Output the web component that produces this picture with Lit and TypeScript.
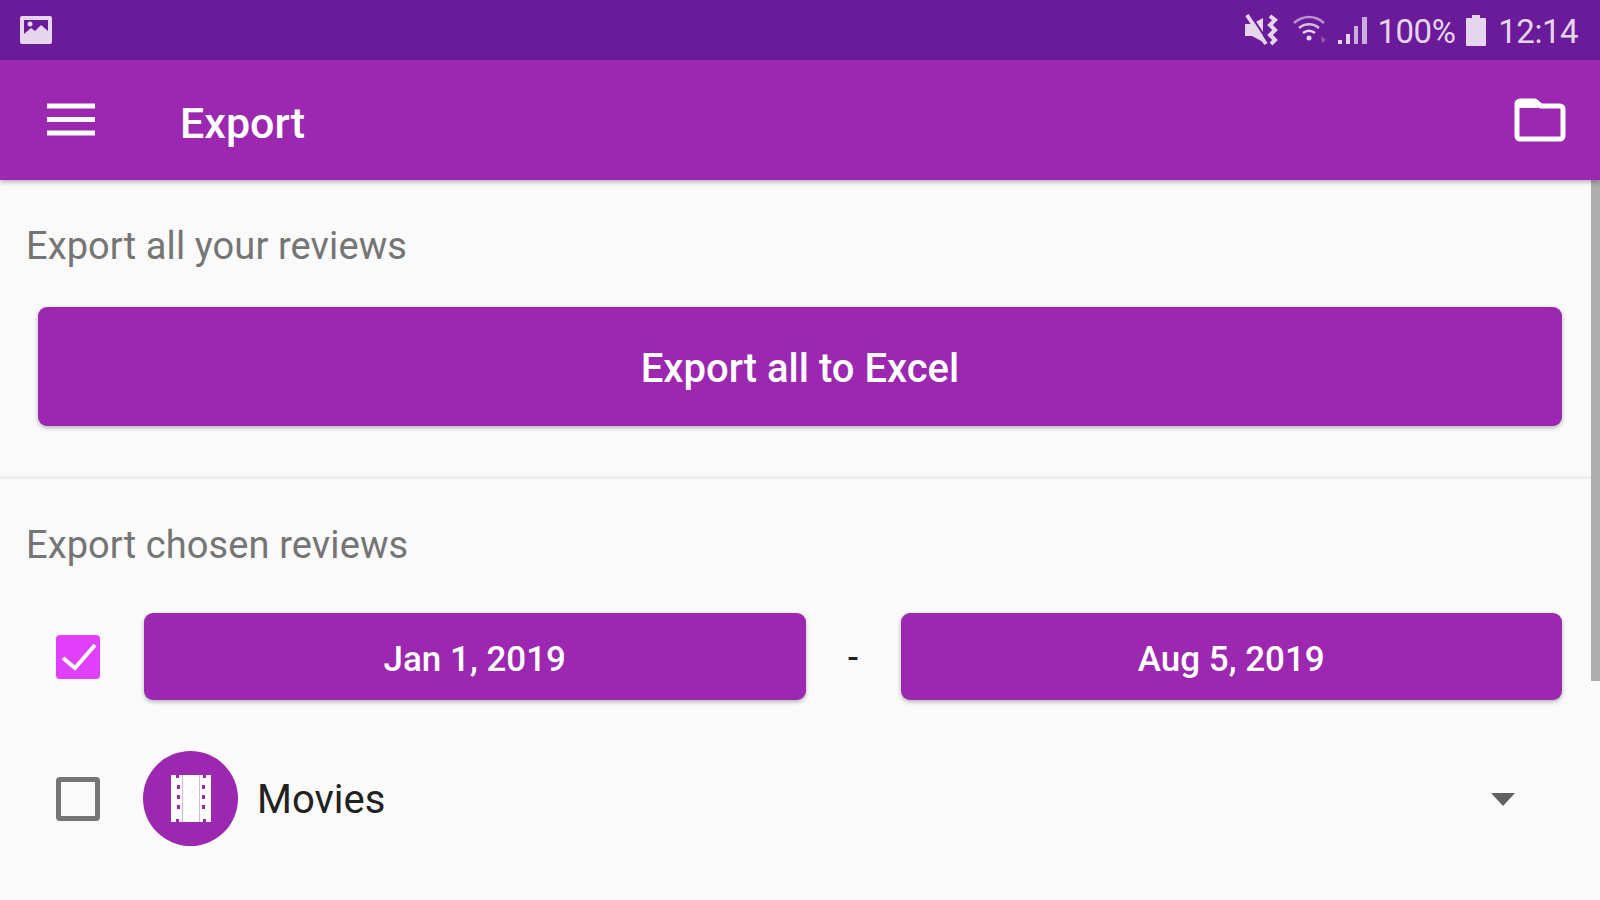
import { LitElement, html, css } from "lit";
import { customElement } from "lit/decorators.js";

@customElement("app-root")
export class AppRoot extends LitElement {
  static styles = css`
    :host {
      display: block;
      width: 1600px;
      height: 900px;
      overflow: hidden;
      position: relative;
      background: #fafafa;
      font-family: Roboto, "Liberation Sans", sans-serif;
    }
    .status {
      height: 60px;
      background: #6a1b9a;
      display: flex;
      align-items: center;
      padding: 0 22px 0 19px;
      color: #e6d5ee;
      box-sizing: border-box;
    }
    .status .spacer { flex: 1; }
    .status .text {
      font-size: 33px;
      line-height: 60px;
      letter-spacing: -0.5px;
      padding-top: 3px;
    }
    .status svg { display: block; }
    .mute { margin-right: 12px; }
    .wifi { margin-right: 7px; }
    .signal { margin-right: 9px; }
    .battery { margin: 0 11px 0 10px; }
    .appbar {
      height: 120px;
      background: #9c27b0;
      display: flex;
      align-items: center;
      padding: 0 34px 0 47px;
      color: #fff;
      box-shadow: 0 2px 5px rgba(0, 0, 0, 0.3);
      position: relative;
      z-index: 1;
    }
    .title {
      margin: 6px 0 0 85px;
      flex: 1;
      font-size: 43px;
      font-weight: 500;
      line-height: 114px;
    }
    .section { padding: 0 38px 0 26px; }
    .first {
      height: 296px;
      border-bottom: 3px solid #eeeeee;
      box-sizing: content-box;
    }
    .label {
      font-size: 38px;
      color: #757575;
      line-height: 44px;
      padding-top: 44px;
      letter-spacing: 0.1px;
    }
    .btn {
      background: #9c27b0;
      color: #fff;
      border-radius: 9px;
      font-weight: 500;
      display: flex;
      align-items: center;
      justify-content: center;
      box-shadow: 0 2px 4px rgba(0, 0, 0, 0.28);
      padding-top: 3px;
      box-sizing: border-box;
    }
    .btn-all {
      height: 119px;
      margin: 39px 0 0 12px;
      font-size: 40px;
    }
    .label.second { padding-top: 44px; }
    .row {
      display: flex;
      align-items: center;
      padding-left: 30px;
    }
    .dates { margin-top: 46px; height: 87px; }
    .date {
      flex: 1;
      height: 87px;
      font-size: 35px;
      padding-top: 5px;
    }
    .dash {
      width: 95px;
      text-align: center;
      font-size: 34px;
      font-weight: 500;
      color: #212121;
    }
    .check {
      width: 44px;
      height: 44px;
      box-sizing: border-box;
      margin-right: 44px;
      border-radius: 4px;
      flex: none;
    }
    .check.on { background: #e040fb; }
    .check.off { border: 5px solid #757575; margin-right: 43px; }
    .check svg { display: block; }
    .cat { margin-top: 51px; height: 95px; }
    .circle {
      width: 95px;
      height: 95px;
      border-radius: 50%;
      background: #9c27b0;
      display: flex;
      align-items: center;
      justify-content: center;
      flex: none;
    }
    .cat-name {
      margin-left: 19px;
      flex: 1;
      font-size: 40px;
      color: #212121;
      padding-top: 2px;
    }
    .arrow {
      width: 0;
      height: 0;
      border-left: 12px solid transparent;
      border-right: 12px solid transparent;
      border-top: 13px solid #616161;
      margin: 2px 47px 0 0;
    }
    .scrollbar {
      position: absolute;
      right: 0;
      top: 180px;
      width: 9px;
      height: 501px;
      background: #adadad;
    }
  `;

  render() {
    return html`
      <div class="status">
        <svg width="34" height="30" viewBox="0 0 34 30">
          <rect x="1" y="1" width="32" height="28" rx="2" fill="#e6d5ee" />
          <rect x="5" y="5" width="24" height="14" fill="#6a1b9a" />
          <circle cx="11" cy="9" r="2.5" fill="#e6d5ee" />
          <path d="M5 19l7-6 4 3 6-6 7 6v3z" fill="#e6d5ee" />
        </svg>
        <div class="spacer"></div>
        <svg class="mute" width="36" height="32" viewBox="0 0 36 32">
          <path d="M1 10h7l11-6v24L8 22H1z" fill="#e6d5ee" />
          <path d="M3 1l19 29" stroke="#e6d5ee" stroke-width="4" />
          <path d="M6 0l19 29" stroke="#6a1b9a" stroke-width="2" />
          <path d="M26 2l5 4-5 5 5 5-5 5 5 5-4 4" stroke="#e6d5ee" stroke-width="4" fill="none" />
        </svg>
        <svg class="wifi" width="38" height="32" viewBox="0 0 38 32">
          <g fill="none" stroke="#b98fd0" stroke-width="2.500">
            <path d="M2 9c9-8 21-8 30 0" />
            <path d="M7 14c6-5 14-5 20 0" stroke="#d6bde3" />
            <path d="M11 19c4-3 8-3 12 0" stroke="#e6d5ee" />
          </g>
          <circle cx="17" cy="24" r="2.5" fill="#e6d5ee" />
          <path d="M29 22l5 4-4 3z" fill="#8e5bab" />
        </svg>
        <svg class="signal" width="32" height="32" viewBox="0 0 32 32">
          <rect x="1" y="26" width="4" height="4" fill="#e6d5ee" />
          <rect x="9" y="20" width="4" height="10" fill="#e6d5ee" />
          <rect x="17" y="12" width="4" height="18" fill="#c9aed9" />
          <rect x="25" y="3" width="5" height="27" fill="#c9aed9" />
        </svg>
        <span class="text">100%</span>
        <svg class="battery" width="22" height="32" viewBox="0 0 22 32">
          <path d="M7 1h8v3h5a1 1 0 0 1 1 1v26a1 1 0 0 1-1 1H2a1 1 0 0 1-1-1V5a1 1 0 0 1 1-1h5z" fill="#e6d5ee" />
        </svg>
        <span class="text">12:14</span>
      </div>

      <div class="appbar">
        <svg width="48" height="34" viewBox="0 0 48 34">
          <path d="M0 3h48M0 16.500h48M0 30h48" stroke="#fff" stroke-width="5" />
        </svg>
        <div class="title">Export</div>
        <svg width="52" height="44" viewBox="0 0 52 44">
          <path d="M3 6a3 3 0 0 1 3-3h15l6 5h19a3 3 0 0 1 3 3v27a3 3 0 0 1-3 3H6a3 3 0 0 1-3-3z" fill="none" stroke="#fff" stroke-width="5" stroke-linejoin="round" />
          <path d="M3 5h17l5 5H3z" fill="#fff" />
        </svg>
      </div>

      <div class="section first">
        <div class="label">Export all your reviews</div>
        <div class="btn btn-all">Export all to Excel</div>
      </div>

      <div class="section">
        <div class="label second">Export chosen reviews</div>
        <div class="row dates">
          <div class="check on">
            <svg width="44" height="44" viewBox="0 0 44 44">
              <path d="M7 23l12 10L39 10" fill="none" stroke="#fff" stroke-width="4" />
            </svg>
          </div>
          <div class="btn date">Jan 1, 2019</div>
          <div class="dash">-</div>
          <div class="btn date">Aug 5, 2019</div>
        </div>
        <div class="row cat">
          <div class="check off"></div>
          <div class="circle">
            <svg width="40" height="47" viewBox="0 0 40 47">
              <path fill-rule="evenodd" fill="#fff" d="M0 0h5v3h3V0h24v3h3V0h5v47h-5v-3h-3v3H8v-3H5v3H0zM6 10v4h3v-4zM6 20v4h3v-4zM6 30v4h3v-4zM31 10v4h3v-4zM31 20v4h3v-4zM31 30v4h3v-4z" />
              <path d="M11.500 0v47M28.500 0v47" stroke="#9c27b0" stroke-width="1" opacity="0.35" />
            </svg>
          </div>
          <div class="cat-name">Movies</div>
          <div class="arrow"></div>
        </div>
      </div>

      <div class="scrollbar"></div>
    `;
  }
}
